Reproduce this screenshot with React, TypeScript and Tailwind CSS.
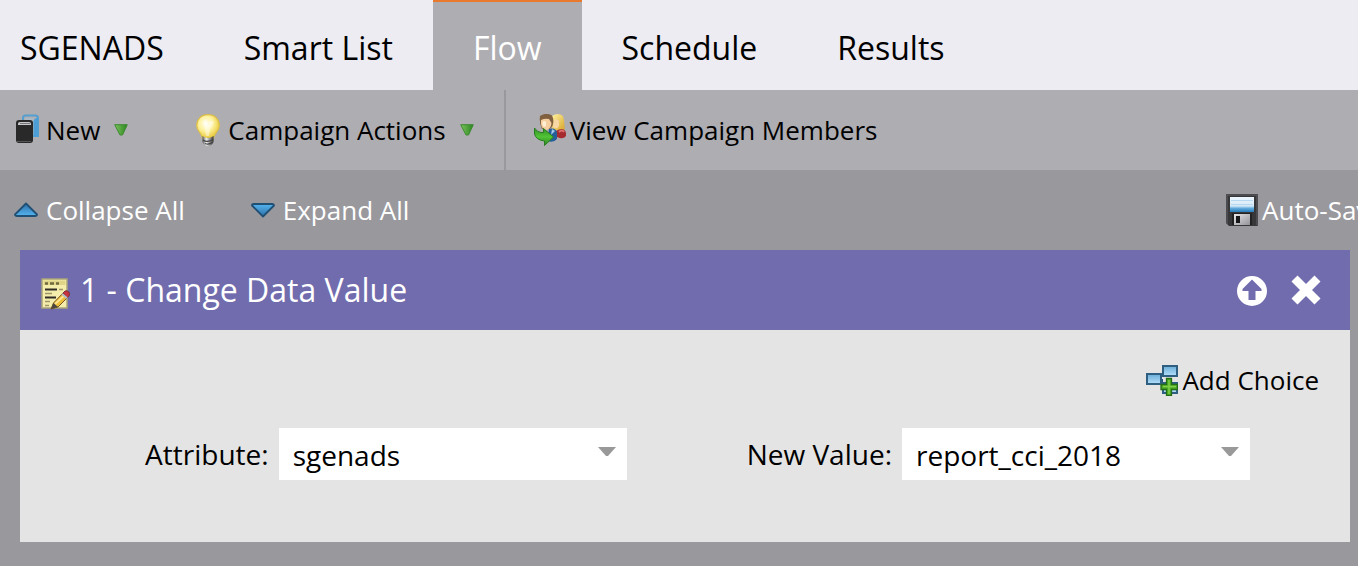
import React from "react";

interface IconProps {
  className?: string;
}

const NewIcon: React.FC<IconProps> = ({ className }) => (
  <svg viewBox="0 0 32 32" className={className} aria-hidden="true">
    <path d="M13 7V4Q13 1.500 15.500 1.500H25.500Q28 1.500 28 4V22H23" fill="none" stroke="#559fd0" strokeWidth="2" />
    <path d="M15 4H24V8H15z" fill="#a9bfcf" opacity=".6" />
    <path d="M23.500 7Q24 4.500 28 3.500V21.500Q28 22.500 27 22.500H23.500z" fill="#4b9fd6" />
    <rect x="6" y="6" width="17" height="23" rx="3" fill="#292929" />
    <path d="M8 11V10Q8 8 10 8H19Q21 8 21 10V11z" fill="#c9c9cd" />
    <path d="M10 9.500H20" stroke="#77777a" />
    <path d="M7 27.500H21" stroke="#555" />
  </svg>
);

const BulbIcon: React.FC<IconProps> = ({ className }) => (
  <svg viewBox="0 0 32 32" className={className} aria-hidden="true">
    <defs>
      <radialGradient id="bulb" cx=".42" cy=".38" r=".62">
        <stop offset="0" stopColor="#fffef0" />
        <stop offset=".5" stopColor="#fdf2a0" />
        <stop offset="1" stopColor="#eacb3c" />
      </radialGradient>
      <linearGradient id="cap">
        <stop offset="0" stopColor="#555" />
        <stop offset=".35" stopColor="#eee" />
        <stop offset="1" stopColor="#333" />
      </linearGradient>
    </defs>
    <path d="M16 .700C9 .700 4.700 5.500 4.700 11.500C4.700 17 9.500 19 10.500 24H21.500C22.500 19 27.300 17 27.300 11.500C27.300 5.500 23 .700 16 .700z" fill="url(#bulb)" stroke="#dcbf48" strokeWidth="1.200" />
    <path d="M11 8Q13 5 15 7L16 11L18 7Q20 6 22 8L18 15L17 22H14L13 15z" fill="#fff" opacity=".45" />
    <path d="M10.500 22Q16 26 21.500 22V28Q20 32 16 32Q12 32 10.500 28z" fill="url(#cap)" />
    <path d="M11 26Q15 29 21.500 25.500M13 29.500Q17 31 20 28.500" fill="none" stroke="#444" strokeWidth="1.300" />
  </svg>
);

const MembersIcon: React.FC<IconProps> = ({ className }) => (
  <svg viewBox="0 0 32 32" className={className} aria-hidden="true">
    <defs>
      <linearGradient id="hair" x2="1" y2="1">
        <stop offset="0" stopColor="#fff3a2" />
        <stop offset="1" stopColor="#d9a62c" />
      </linearGradient>
      <linearGradient id="go" x2="0" y2="1">
        <stop offset="0" stopColor="#2f8f22" />
        <stop offset=".5" stopColor="#52c437" />
        <stop offset="1" stopColor="#2c8420" />
      </linearGradient>
    </defs>
    <path d="M18 2Q24-2 29 2Q31 8 30.500 16H18z" fill="url(#hair)" />
    <path d="M20 6Q23 4 25 7V12Q23 16 19 13z" fill="#f8d7a5" />
    <path d="M22 17Q30 12 32 19V22Q29 26 23 23z" fill="#a52b2e" />
    <path d="M25 18Q28 15 30 18" fill="none" stroke="#dd706d" strokeWidth="2" />
    <path d="M15 15Q22 13 23 19V25Q20 29 13 27z" fill="#245f9b" />
    <path d="M18 15L17 21L21 17z" fill="#a6cce9" />
    <path d="M6 2Q12-2 18 1.500Q20.500 6 18.500 12L16 15H8Q5 9 6 2z" fill="#80603f" />
    <path d="M7 6Q11 4 15 5L17.500 9Q17 15 12 16Q7.500 15 7 10z" fill="#f5cf9f" />
    <path d="M8.500 8Q10 6 12 8V12Q10 14 8.500 11z" fill="#fff0d5" />
    <path d="M.500 14Q3 18 7 18.500H9.500V14.500L19.500 23L10.500 31.500V27Q2 26 .500 20z" fill="url(#go)" stroke="#287d20" strokeLinejoin="round" />
  </svg>
);

const FloppyIcon: React.FC<IconProps> = ({ className }) => (
  <svg viewBox="0 0 32 32" className={className} aria-hidden="true">
    <defs>
      <linearGradient id="label" x2="0" y2="1">
        <stop offset="0" stopColor="#edf7ff" />
        <stop offset=".6" stopColor="#d4e9f7" />
        <stop offset=".75" stopColor="#62acdd" />
        <stop offset="1" stopColor="#2679b8" />
      </linearGradient>
      <linearGradient id="shutter" x2="1" y2="1">
        <stop offset="0" stopColor="#e8e8ea" />
        <stop offset="1" stopColor="#929298" />
      </linearGradient>
    </defs>
    <path d="M1 0H31Q32 0 32 1V31Q32 32 31 32H3L0 29V1Q0 0 1 0z" fill="#37373a" />
    <path d="M1 30V1H31V31" fill="none" stroke="#626266" />
    <rect x="4" y="3" width="24" height="15" fill="url(#label)" />
    <path d="M5 6.500H27M5 10.500H27" stroke="#b7d8ee" />
    <path d="M6 19H26V31H6z" fill="#222" />
    <path d="M8 20H24V31H8z" fill="url(#shutter)" />
    <rect x="10" y="22" width="4" height="7" fill="#171719" />
  </svg>
);

const NoteIcon: React.FC<IconProps> = ({ className }) => (
  <svg viewBox="0 0 32 32" className={className} aria-hidden="true">
    <path d="M2 1H27V30H2z" fill="#f5edab" stroke="#aaa479" strokeWidth="1.500" />
    <path d="M3.500 2.500H25.500V7H3.500z" fill="#dfd487" />
    <path d="M5 5.500H8M10 5.500H14M16 5.500H19" stroke="#706940" strokeWidth="2.500" />
    <path d="M5 11.500H17M5 19.500H16" stroke="#302d26" strokeWidth="2" />
    <path d="M5 15.500H12M5 23.500H10M19 11.500H23M5 27.500H9" stroke="#9e9869" strokeWidth="1.500" />
    <path d="M11 31L13.500 25L24 14L29 18L18 29z" fill="#efbd3c" stroke="#79541f" />
    <path d="M15 26L26 16" stroke="#ffe68e" strokeWidth="1.800" />
    <path d="M23 15L25 13Q27 12 29 14Q30 16 29 18L27.500 19.500z" fill="#c6323e" stroke="#7c3540" />
    <path d="M22 16L27 20" stroke="#b8bdc5" strokeWidth="2" />
    <path d="M11 31L13.500 25L18 29z" fill="#4c4640" />
  </svg>
);

const AddChoiceIcon: React.FC<IconProps> = ({ className }) => (
  <svg viewBox="0 0 32 32" className={className} aria-hidden="true">
    <defs>
      <linearGradient id="box" x2="0" y2="1">
        <stop offset="0" stopColor="#69acd7" />
        <stop offset="1" stopColor="#b5e0fa" />
      </linearGradient>
    </defs>
    <path d="M12 11H17M16 15V23" stroke="#245575" strokeWidth="2" />
    <rect x="17" y="2" width="14" height="10" fill="url(#box)" stroke="#2e5f80" strokeWidth="2" />
    <rect x="1" y="10" width="14" height="10" fill="url(#box)" stroke="#2e5f80" strokeWidth="2" />
    <rect x="17" y="19" width="14" height="10" fill="url(#box)" stroke="#2e5f80" strokeWidth="2" />
    <path d="M20.500 14.500H25.500V20.500H31.500V25.500H25.500V31.500H20.500V25.500H15V20.500H20.500z" fill="#4dac24" stroke="#246c16" strokeWidth="1.300" />
    <path d="M23 16V30M17 22.500H30" stroke="#82d149" strokeWidth="1.400" />
  </svg>
);

const GreenArrow: React.FC<IconProps> = ({ className }) => (
  <svg viewBox="0 0 14 12" className={className} aria-hidden="true">
    <defs>
      <linearGradient id="green">
        <stop offset="0" stopColor="#7bc35c" />
        <stop offset="1" stopColor="#2b8420" />
      </linearGradient>
    </defs>
    <path d="M.700 .700H13.300L8.500 11H6z" fill="url(#green)" stroke="#3c8a2f" strokeLinejoin="round" />
  </svg>
);

const BlueArrow: React.FC<IconProps> = ({ className }) => (
  <svg viewBox="0 0 24 16" className={className} aria-hidden="true">
    <defs>
      <linearGradient id="blue" x2="0" y2="1">
        <stop offset="0" stopColor="#2e6fa6" />
        <stop offset="1" stopColor="#55b5f0" />
      </linearGradient>
    </defs>
    <path d="M12 1.500L23 12.500Q23 14 21 14H3Q1 14 1 12.500z" fill="url(#blue)" stroke="#204f74" strokeWidth="1.800" strokeLinejoin="round" />
  </svg>
);

const MoveUpIcon: React.FC<IconProps> = ({ className }) => (
  <svg viewBox="0 0 32 32" className={className} aria-hidden="true">
    <path
      fillRule="evenodd"
      d="M16 2A15 15 0 1 1 16 32A15 15 0 1 1 16 2zM16 5.500L6.500 15V17H12.500V26H19.500V17H25.500V15z"
      fill="#fff"
    />
  </svg>
);

const CloseIcon: React.FC<IconProps> = ({ className }) => (
  <svg viewBox="0 0 32 32" className={className} aria-hidden="true">
    <path d="M4.500 4.500L27.500 27.500M27.500 4.500L4.500 27.500" stroke="#fff" strokeWidth="8.500" />
  </svg>
);

interface FieldProps {
  id: string;
  label: string;
  value: string;
}

const SelectField: React.FC<FieldProps> = ({ id, label, value }) => (
  <div className="flex items-center gap-2.5">
    <label htmlFor={id}>{label}</label>
    <div className="relative">
      <select
        id={id}
        defaultValue={value}
        className="block h-[52px] w-[348px] appearance-none rounded-none bg-white pl-3.5 pt-0.5 outline-none"
      >
        <option>{value}</option>
      </select>
      <svg
        viewBox="0 0 18 10"
        className="pointer-events-none absolute right-[11px] top-[19px] h-2.5 w-[18px]"
        aria-hidden="true"
      >
        <path d="M0 0H18L10 9H8z" fill="#999" />
      </svg>
    </div>
  </div>
);

const tabs = ["SGENADS", "Smart List", "Flow", "Schedule", "Results"];

export default function App() {
  return (
    <div className="min-h-screen overflow-hidden whitespace-nowrap bg-[#99989d] font-['Open_Sans',sans-serif] text-[26px] leading-9 text-black">
      {/* Tabs */}
      <nav className="-ml-5 flex h-[90px] bg-[#edecf2] text-[32px]">
        {tabs.map((tab) => (
          <button
            key={tab}
            className={
              tab === "Flow"
                ? "border-t-2 border-[#e9792c] bg-[#aeadb2] px-10 pt-1 text-white"
                : "border-t-2 border-transparent px-10 pt-1"
            }
          >
            {tab}
          </button>
        ))}
      </nav>

      {/* Toolbar */}
      <div className="flex h-20 bg-[#aeadb2]">
        <div className="flex items-center gap-16 border-r-2 border-[#99989d] pl-2.5 pr-[30px]">
          <button className="flex items-center gap-1">
            <NewIcon className="size-8" />
            New
            <GreenArrow className="ml-2.5 h-3 w-3.5" />
          </button>
          <button className="flex items-center gap-1">
            <BulbIcon className="size-8" />
            Campaign Actions
            <GreenArrow className="ml-2.5 h-3 w-3.5" />
          </button>
        </div>
        <button className="ml-7 flex items-center gap-1">
          <MembersIcon className="size-8" />
          View Campaign Members
        </button>
      </div>

      {/* Expand / collapse */}
      <div className="flex h-20 items-center justify-between pl-3.5 text-white">
        <div className="flex gap-[66px]">
          <button className="flex items-center gap-2">
            <BlueArrow className="h-4 w-6" />
            Collapse All
          </button>
          <button className="flex items-center gap-2">
            <BlueArrow className="h-4 w-6 rotate-180" />
            Expand All
          </button>
        </div>
        <div className="flex w-[132px] items-center gap-1 overflow-hidden">
          <FloppyIcon className="size-8 shrink-0" />
          <span>Auto-Saved</span>
        </div>
      </div>

      {/* Flow step */}
      <section className="ml-5 mr-2 bg-[#e4e4e4]">
        <header className="flex h-20 items-center justify-between bg-[#706cad] pl-5 pr-7 text-white">
          <div className="flex items-center gap-2">
            <NoteIcon className="mt-2 size-8" />
            <h2 className="text-[32px]">1 - Change Data Value</h2>
          </div>
          <div className="flex items-center gap-[22px]">
            <button aria-label="Move up">
              <MoveUpIcon className="size-8" />
            </button>
            <button aria-label="Remove">
              <CloseIcon className="size-8" />
            </button>
          </div>
        </header>
        <div className="pb-[62px] pt-8">
          <div className="flex justify-end pr-[31px]">
            <button className="flex items-center gap-1">
              <AddChoiceIcon className="size-8" />
              Add Choice
            </button>
          </div>
          <div className="mt-[30px] flex justify-end gap-[120px] pr-[100px] text-[28px]">
            <SelectField id="attribute" label="Attribute:" value="sgenads" />
            <SelectField id="newValue" label="New Value:" value="report_cci_2018" />
          </div>
        </div>
      </section>
    </div>
  );
}
